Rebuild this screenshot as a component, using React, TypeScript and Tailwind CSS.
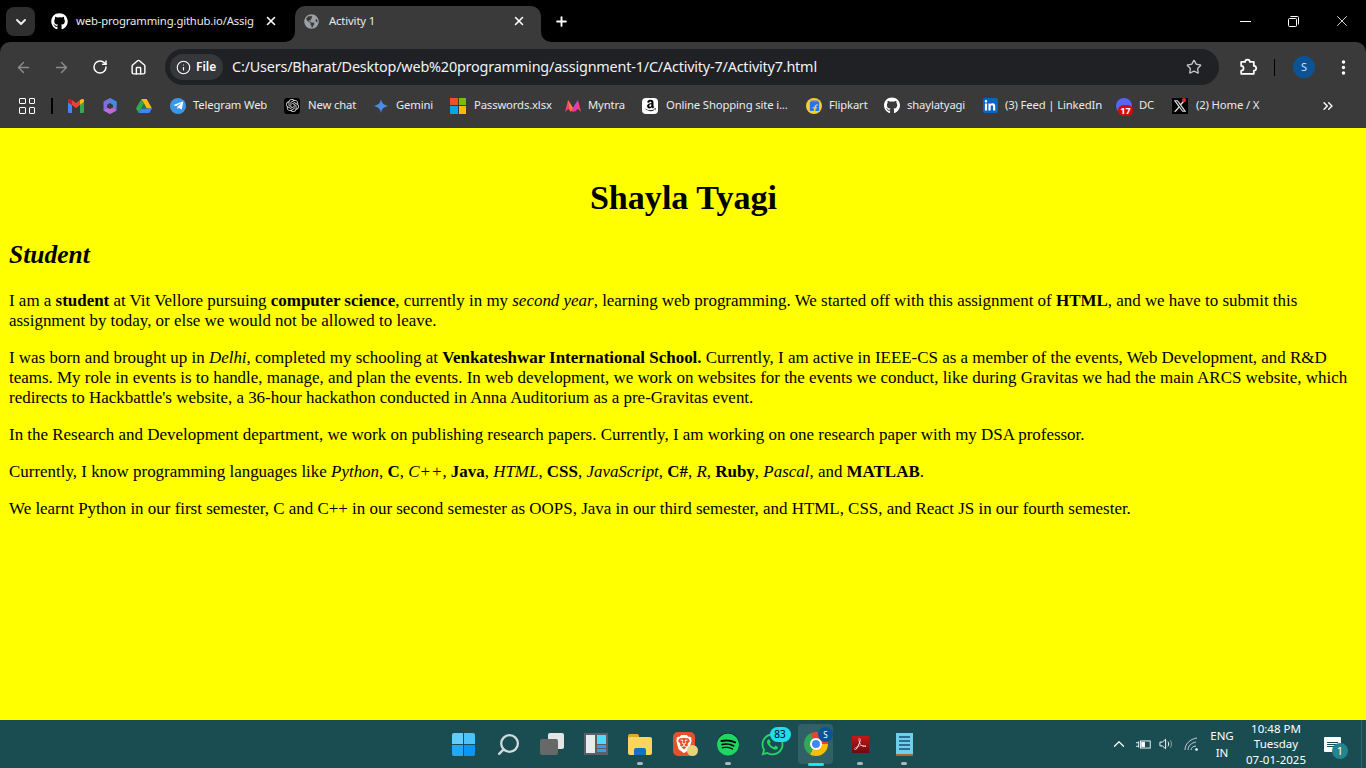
import { ArrowLeft, ArrowRight, ChevronDown, ChevronUp, ChevronsRight, EllipsisVertical, House, Info, Plus, RotateCw, Search, Star, X } from "lucide-react";
import { FaGithub, FaTelegramPlane, FaWhatsapp, FaLinkedinIn, FaAmazon, FaGlobeAmericas } from "react-icons/fa";
import { SiSpotify, SiAdobeacrobatreader, SiOpenai, SiFlipkart, SiBrave } from "react-icons/si";

const uiFont = "font-['Noto_Sans',sans-serif]";

function GmailIcon() {
  return (
    <svg viewBox="0 0 16 14" className="w-4 h-[14px]">
      <path d="M0 3v9.500A1.200 1.200 0 0 0 1.200 14H4V6z" fill="#4285f4" />
      <path d="M12 6v8h2.800a1.200 1.200 0 0 0 1.200-1.200V3z" fill="#34a853" />
      <path d="M4 6 8 9l4-3V1L8 4 4 1z" fill="#ea4335" />
      <path d="M0 3l4 3V1L2.400.2A1.500 1.500 0 0 0 0 1.500z" fill="#c5221f" />
      <path d="M12 1v5l4-3V1.500A1.500 1.500 0 0 0 13.600.2z" fill="#fbbc04" />
    </svg>
  );
}

function CopilotIcon() {
  return (
    <svg viewBox="0 0 16 16" className="w-4 h-4">
      <path d="M8 0l6.500 3.500v9L8 16l-6.500-3.500v-9z" fill="#7c6fe0" />
      <path d="M8 0l6.500 3.500v5L8 5z" fill="#3d8fe0" />
      <path d="M1.500 12.500 8 16l6.500-3.500L8 9z" fill="#c06ad8" />
      <path d="M8 5l3 2v2.500L8 11 5 9.500V7z" fill="#3a3a3a" />
    </svg>
  );
}

function DriveIcon() {
  return (
    <svg viewBox="0 0 16 14" className="w-4 h-[14px]">
      <path d="M5.300 0h5.400L16 9.500h-5.300z" fill="#fbbc04" />
      <path d="M5.300 0 0 9.500 2.700 14l5.300-9.300z" fill="#34a853" />
      <path d="M5.300 9.500H16L13.300 14H2.700z" fill="#4285f4" />
      <path d="M5.300 9.500h5.400L8 4.700z" fill="#188038" />
    </svg>
  );
}

function GeminiIcon() {
  return (
    <svg viewBox="0 0 16 16" className="w-4 h-4">
      <path d="M8 1c.6 3.900 2.800 6.200 7 7-4.200.8-6.400 3.100-7 7-.6-3.900-2.800-6.200-7-7 4.200-.8 6.400-3.100 7-7z" fill="#4b8ae8" />
    </svg>
  );
}

function ExcelIcon() {
  return (
    <div className="grid grid-cols-2 gap-px w-4 h-4">
      <div className="bg-[#f25022]" />
      <div className="bg-[#7fba00]" />
      <div className="bg-[#00a4ef]" />
      <div className="bg-[#ffb900]" />
    </div>
  );
}

function MyntraIcon() {
  return (
    <svg viewBox="0 0 16 12" className="w-4 h-3">
      <path d="M0 12 3 0l5 8 5-8 3 12-3-3-5 3-5-3z" fill="#ff3f6c" />
      <path d="M3 0l5 8-3 4z" fill="#ff7a3d" />
      <path d="M13 0 8 8l3 4z" fill="#d63ad8" />
    </svg>
  );
}

function AmazonIcon() {
  return (
    <div className="w-4 h-4 rounded-sm bg-white flex items-center justify-center text-black">
      <FaAmazon size={13} />
    </div>
  );
}

function FlipkartIcon() {
  return (
    <div className="w-4 h-4 rounded-full bg-[#f7ce2f] flex items-center justify-center text-[#2874f0]">
      <SiFlipkart size={11} />
    </div>
  );
}

function LinkedinIcon() {
  return (
    <div className="w-[15px] h-[15px] rounded-[2px] bg-[#0a66c2] flex items-center justify-center text-white">
      <FaLinkedinIn size={12} />
    </div>
  );
}

function DcIcon() {
  return (
    <div className="relative w-4 h-4 rounded-full bg-[#5865f2]">
      <div className="absolute left-[2px] -bottom-[2px] w-[15px] h-[11px] rounded-full bg-[#d00d0d] text-white text-[9px] font-bold leading-[11px] text-center">17</div>
    </div>
  );
}

function XIcon() {
  return (
    <div className="relative w-4 h-4 bg-black flex items-center justify-center">
      <svg viewBox="0 0 24 24" className="w-[14px] h-[14px]" fill="#ddd">
        <path d="M18.200 2h3.300l-7.200 8.300L22.800 22h-6.700l-5.200-6.800L5 22H1.700l7.700-8.800L1.300 2h6.800l4.700 6.200zm-1.200 18h1.800L7.100 3.900H5.100z" />
      </svg>
      <div className="absolute top-0 right-[2px] w-1 h-1 rounded-full bg-[#f4212e]" />
    </div>
  );
}

function ChatGptIcon() {
  return (
    <div className="w-4 h-4 rounded-[3px] bg-black flex items-center justify-center text-[#ddd]">
      <SiOpenai size={13} />
    </div>
  );
}

function TelegramIcon() {
  return (
    <div className="w-4 h-4 rounded-full bg-[#3a97e8] flex items-center justify-center text-white">
      <FaTelegramPlane size={11} />
    </div>
  );
}

function Bookmark({ icon, label, labelClass, gapClass }: { icon: React.ReactNode; label: string; labelClass: string; gapClass: string }) {
  return (
    <div className="flex items-center">
      <div className={`w-4 h-4 flex items-center justify-center shrink-0 ${gapClass}`}>{icon}</div>
      <span className={`text-[11.300px] tracking-[-0.15px] text-[#e8eaed] whitespace-nowrap ${labelClass}`}>{label}</span>
    </div>
  );
}

function ChromeIcon() {
  return (
    <div className="relative w-[24px] h-[24px]">
      <div className="w-[24px] h-[24px] rounded-full bg-[conic-gradient(from_-30deg,#ea4335_0_120deg,#fbbc04_120deg_240deg,#34a853_240deg_360deg)] flex items-center justify-center">
        <div className="w-[12px] h-[12px] rounded-full bg-[#4285f4] border-2 border-white" />
      </div>
      <div className="absolute -top-[5px] -right-[5px] w-[15px] h-[15px] rounded-full bg-[#0b5394] text-white text-[8px] leading-[15px] text-center">S</div>
    </div>
  );
}

function TaskbarSlot({ children, running }: { children: React.ReactNode; running?: boolean }) {
  return (
    <div className="relative w-[44px] h-[48px] flex items-center justify-center">
      {children}
      {running && <div className="absolute left-[19px] bottom-[3px] w-[6px] h-[3px] rounded-full bg-[#a9b8ba]" />}
    </div>
  );
}

function TaskbarIcons() {
  return (
    <div className="flex items-center w-[484px]">
      <div className="w-[44px] h-[48px] flex items-center justify-center -translate-x-px">
        <div className="grid grid-cols-2 gap-[1px] w-[23px] h-[23px]">
          <div className="bg-[#62cdfb] rounded-tl-[2px]" />
          <div className="bg-[#4cc2fa] rounded-tr-[2px]" />
          <div className="bg-[#22a8f5] rounded-bl-[2px]" />
          <div className="bg-[#0f94f0] rounded-br-[2px]" />
        </div>
      </div>
      <div className="w-[44px] h-[48px] flex items-center justify-center text-[#cfdcdc]">
        <Search size={25} strokeWidth={2.2} className="-scale-x-100" />
      </div>
      <div className="w-[44px] h-[48px] flex items-center justify-center">
        <div className="relative w-[24px] h-[22px]">
          <div className="absolute right-0 top-0 w-[16px] h-[16px] bg-[#e4e6e6] rounded-[2px]" />
          <div className="absolute left-0 bottom-0 w-[18px] h-[16px] bg-[#686868] rounded-[2px]" />
        </div>
      </div>
      <div className="w-[44px] h-[48px] flex items-center justify-center">
        <div className="w-[24px] h-[22px] bg-[#5b5f66] p-[2px] flex gap-[2px]">
          <div className="w-[9px] bg-[#e8ebee]" />
          <div className="flex-1 flex flex-col gap-[1px]">
            <div className="h-[9px] bg-[#4fdcf7]" />
            <div className="h-[3px] bg-[#2aa6e8]" />
            <div className="h-[3px] bg-[#2aa6e8]" />
          </div>
        </div>
      </div>
      <TaskbarSlot running>
        <div className="relative w-[24px] h-[21px]">
          <div className="absolute left-0 top-0 w-[11px] h-[5px] bg-[#e0a92a] rounded-t-[2px]" />
          <div className="absolute left-0 top-[3px] w-[24px] h-[18px] bg-[#fbd55e] rounded-[2px]" />
          <div className="absolute left-[6px] bottom-0 w-[12px] h-[7px] bg-[#1273c4] rounded-t-[2px]" />
        </div>
      </TaskbarSlot>
      <TaskbarSlot>
        <div className="relative w-[22px] h-[24px] rounded-[5px] bg-[#e7512a] flex items-center justify-center text-white">
          <SiBrave size={18} />
          <div className="absolute -right-[3px] bottom-0 w-[11px] h-[11px] rounded-full bg-[#e8d27a]" />
        </div>
      </TaskbarSlot>
      <TaskbarSlot running>
        <div className="w-[22px] h-[22px] rounded-full bg-black flex items-center justify-center text-[#1ed760]">
          <SiSpotify size={23} />
        </div>
      </TaskbarSlot>
      <TaskbarSlot>
        <div className="relative text-[#25d366]">
          <FaWhatsapp size={25} />
          <div className="absolute -top-[5px] -right-[6px] w-[21px] h-[15px] rounded-full bg-[#22dcea] text-black text-[10px] leading-[15px] text-center">83</div>
        </div>
      </TaskbarSlot>
      <div className="relative w-[44px] h-[48px] flex items-center justify-center">
        <div className="absolute left-[4px] top-[4px] w-[35px] h-[40px] rounded-[4px] bg-[#2f6166]" />
        <div className="relative"><ChromeIcon /></div>
        <div className="absolute left-[14px] bottom-[2px] w-[16px] h-[3px] rounded-full bg-[#22e3f2]" />
      </div>
      <TaskbarSlot running>
        <div className="w-[17px] h-[17px] bg-gradient-to-b from-[#c8161c] to-[#6d0a0d] flex items-center justify-center text-white">
          <SiAdobeacrobatreader size={12} />
        </div>
      </TaskbarSlot>
      <TaskbarSlot running>
        <div className="w-[17px] h-[23px] bg-[#6fd0ee] border-b-2 border-[#a86a2c] flex flex-col gap-[2px] justify-center px-[3px]">
          <div className="h-[2px] bg-[#2a6f90]" />
          <div className="h-[2px] bg-[#2a6f90]" />
          <div className="h-[2px] bg-[#2a6f90]" />
          <div className="h-[2px] bg-[#2a6f90]" />
        </div>
      </TaskbarSlot>
    </div>
  );
}

function Tray() {
  return (
    <div className={`flex items-center flex-1 h-full text-white text-[11.500px] ${uiFont}`}>
      <div className="w-[20px] ml-[183px] flex justify-center"><ChevronUp size={18} strokeWidth={1.6} /></div>
      <svg viewBox="0 0 18 12" className="w-[16px] h-[11px] ml-[7px]" fill="none" stroke="#fff" strokeWidth="1">
        <rect x="5" y="2" width="11" height="8" />
        <path d="M0 4h3M0 8h3M3 2.500v7" />
        <rect x="6.500" y="3.500" width="3" height="5" fill="#fff" />
      </svg>
      <svg viewBox="0 0 18 14" className="w-[17px] h-[14px] ml-[7px]" fill="none" stroke="#fff" strokeWidth="1">
        <path d="M1 5h2.500L7 2v10L3.500 9H1z" />
        <path d="M9.500 4.500c1 1.500 1 3.500 0 5" />
        <path d="M12 3c1.600 2.500 1.600 5.500 0 8" opacity=".5" />
      </svg>
      <svg viewBox="0 0 16 14" className="w-[16px] h-[14px] ml-[8px]" fill="none" stroke="#ccd" strokeWidth="1">
        <path d="M1 13C1 7 6 2 13 1" />
        <path d="M4 13c0-4 3-7 8-8" />
        <path d="M7 13c0-2 2-4 5-4" />
        <circle cx="12.500" cy="12.500" r="1.300" fill="#fff" stroke="none" />
      </svg>
      <div className="w-[38px] ml-[3px] text-center leading-[17px]">
        <div>ENG</div>
        <div>IN</div>
      </div>
      <div className="w-[70px] text-center leading-[15.500px]">
        <div>10:48 PM</div>
        <div>Tuesday</div>
        <div>07-01-2025</div>
      </div>
      <div className="relative ml-[13px] w-[17px] h-[15px] bg-white rounded-[1px] flex flex-col gap-[1px] justify-center px-[3px]">
        <div className="h-px bg-[#1a4d52]" />
        <div className="h-px bg-[#1a4d52]" />
        <div className="h-px bg-[#1a4d52]" />
        <div className="absolute -right-[7px] -bottom-[7px] w-[16px] h-[16px] rounded-full bg-[#22858f] text-[11px] leading-[16px] text-center">1</div>
      </div>
      <div className="flex-1" />
      <div className="w-px h-full bg-[#2f6166] mr-[4px]" />
    </div>
  );
}

export default function App() {
  return (
    <div className="w-[1366px] h-[768px] overflow-hidden flex flex-col bg-black">
      {/* tab strip */}
      <div className={`h-[42px] flex items-end bg-black text-[11.300px] tracking-[-0.15px] text-[#e8eaed] ${uiFont}`}>
        <div className="w-[29px] h-[29px] ml-[6px] mb-[6px] rounded-lg bg-[#2f2f2f] flex items-center justify-center">
          <ChevronDown size={16} strokeWidth={3} />
        </div>
        <div className="flex items-center w-[260px] h-[36px] pl-[16px] pb-[6px]">
          <FaGithub size={17} className="text-white shrink-0" />
          <span className="ml-[8px] w-[177px] whitespace-nowrap">web-programming.github.io/Assig</span>
          <X size={14} strokeWidth={2.6} className="ml-[11px] text-white shrink-0" />
        </div>
        <div className="relative flex items-center w-[246px] h-[36px] pl-[9px] pb-[6px] rounded-t-[10px] bg-[#3a3a3a]">
          <svg viewBox="0 0 10 10" className="absolute -left-[10px] bottom-0 w-[10px] h-[10px]" fill="#3a3a3a"><path d="M10 0v10H0a10 10 0 0 0 10-10z" /></svg>
          <svg viewBox="0 0 10 10" className="absolute -right-[10px] bottom-0 w-[10px] h-[10px]" fill="#3a3a3a"><path d="M0 0v10h10A10 10 0 0 1 0 0z" /></svg>
          <FaGlobeAmericas size={15} className="text-[#9aa0a6] shrink-0" />
          <span className="ml-[10px] w-[183px] whitespace-nowrap">Activity 1</span>
          <X size={14} strokeWidth={2.6} className="text-white shrink-0" />
        </div>
        <div className="h-[36px] flex items-center ml-[13px] pb-[6px]">
          <Plus size={15} strokeWidth={3} className="text-white" />
        </div>
        <div className="flex-1" />
        <div className="h-[42px] flex items-center text-white">
          <div className="w-[48px] flex justify-center"><div className="w-[11px] h-px bg-white" /></div>
          <div className="w-[48px] flex justify-center">
            <svg viewBox="0 0 11 11" className="w-[11px] h-[11px]" fill="none" stroke="#fff">
              <rect x=".5" y="2.500" width="8" height="8" rx="1" />
              <path d="M2.500.5h7a1 1 0 0 1 1 1v7" />
            </svg>
          </div>
          <div className="w-[49px] flex justify-center"><X size={18} strokeWidth={1.1} /></div>
        </div>
      </div>

      {/* toolbar */}
      <div className="h-[46px] bg-[#3a3a3a] rounded-t-[10px] flex items-center pl-[15px] pt-[4px] text-[#e8eaed]">
        <ArrowLeft size={17} className="text-[#8a8c8e]" />
        <ArrowRight size={17} className="ml-[21px] text-[#8a8c8e]" />
        <RotateCw size={16} strokeWidth={2.2} className="ml-[22px] text-white" />
        <House size={17} strokeWidth={2} className="ml-[22px] text-white" />
        <div className={`ml-[18px] w-[1054px] h-[36px] rounded-full bg-[#202124] flex items-center pl-[5px] pr-[17px] ${uiFont}`}>
          <div className="w-[53px] h-[26px] rounded-full bg-[#36373a] flex items-center pl-[6px] gap-[5px]">
            <Info size={15} strokeWidth={1.8} className="text-white shrink-0" />
            <span className="text-[12px] font-semibold text-white">File</span>
          </div>
          <span className="ml-[9px] text-[14.400px] text-[#f1f3f4] whitespace-nowrap tracking-[-0.19px]">C:/Users/Bharat/Desktop/web%20programming/assignment-1/C/Activity-7/Activity7.html</span>
          <div className="flex-1" />
          <Star size={16} strokeWidth={2} className="text-[#c4c7c5]" />
        </div>
        <svg viewBox="0 0 24 24" className="w-[19px] h-[19px] ml-[19px]" fill="none" stroke="#fff" strokeWidth="2.200" strokeLinejoin="round">
          <path d="M4 5h5a3 3 0 0 1 6 0h5v5a3 3 0 0 1 0 6v4H4v-4a3 3 0 0 0 0-6z" />
        </svg>
        <div className="w-px h-[17px] bg-black ml-[17px]" />
        <div className="w-[22px] h-[22px] ml-[18px] rounded-full bg-[#0b5394] text-[#cfe2ff] text-[11px] leading-[22px] text-center font-['Noto_Sans',sans-serif]">S</div>
        <EllipsisVertical size={19} strokeWidth={2.4} className="ml-[19px] text-white" />
      </div>

      {/* bookmarks */}
      <div className={`h-[40px] bg-[#3a3a3a] flex items-center pl-[19px] pb-[5px] ${uiFont}`}>
        <div className="w-4 h-4 grid grid-cols-2 gap-[3px]">
          <div className="border-[1.500px] border-white rounded-[1px]" />
          <div className="border-[1.500px] border-white rounded-[1px]" />
          <div className="border-[1.500px] border-white rounded-[1px]" />
          <div className="border-[1.500px] border-white rounded-[1px]" />
        </div>
        <div className="w-[2px] h-[16px] bg-black ml-[16px] mr-[15px]" />
        <div className="w-4 flex justify-center"><GmailIcon /></div>
        <div className="w-4 ml-[18px]"><CopilotIcon /></div>
        <div className="w-4 ml-[18px]"><DriveIcon /></div>
        <div className="flex items-center ml-[18px] gap-[17px]">
          <Bookmark icon={<TelegramIcon />} label="Telegram Web" labelClass="w-[74px]" gapClass="mr-[7px]" />
          <Bookmark icon={<ChatGptIcon />} label="New chat" labelClass="w-[48px]" gapClass="mr-[8px]" />
          <Bookmark icon={<GeminiIcon />} label="Gemini" labelClass="w-[37px]" gapClass="mr-[7px]" />
          <Bookmark icon={<ExcelIcon />} label="Passwords.xlsx" labelClass="w-[74px]" gapClass="mr-[8px]" />
          <Bookmark icon={<MyntraIcon />} label="Myntra" labelClass="w-[37px]" gapClass="mr-[7px]" />
          <Bookmark icon={<AmazonIcon />} label="Online Shopping site i..." labelClass="w-[123px]" gapClass="mr-[8px]" />
          <Bookmark icon={<FlipkartIcon />} label="Flipkart" labelClass="w-[38px]" gapClass="mr-[7px]" />
          <Bookmark icon={<FaGithub size={17} className="text-white" />} label="shaylatyagi" labelClass="w-[58px]" gapClass="mr-[7px]" />
          <Bookmark icon={<LinkedinIcon />} label="(3) Feed | LinkedIn" labelClass="w-[94px]" gapClass="mr-[7px]" />
          <Bookmark icon={<DcIcon />} label="DC" labelClass="w-[16px]" gapClass="mr-[7px]" />
          <Bookmark icon={<XIcon />} label="(2) Home / X" labelClass="w-[66px]" gapClass="mr-[8px]" />
        </div>
        <ChevronsRight size={16} strokeWidth={2} className="ml-[58px] text-white" />
      </div>

      {/* page */}
      <main className="flex-1 bg-[#ffff00] text-black pl-[9px] pr-[8px] pt-[50px] font-['Liberation_Serif',serif] text-[16.950px] leading-[20px]">
        <h1 className="text-[34.100px] leading-[40px] font-bold text-center">Shayla Tyagi</h1>
        <h2 className="mt-[22px] text-[25.500px] leading-[30px] font-bold italic">Student</h2>
        <p className="mt-[21px]">
          I am a <b>student</b> at Vit Vellore pursuing <b>computer science</b>, currently in my <i>second year</i>, learning web programming. We started off with this assignment of <b>HTML</b>, and we have to submit this assignment by today, or else we would not be allowed to leave.
        </p>
        <p className="mt-[17px]">
          I was born and brought up in <i>Delhi</i>, completed my schooling at <b>Venkateshwar International School.</b> Currently, I am active in IEEE-CS as a member of the events, Web Development, and R&amp;D teams. My role in events is to handle, manage, and plan the events. In web development, we work on websites for the events we conduct, like during Gravitas we had the main ARCS website, which redirects to Hackbattle's website, a 36-hour hackathon conducted in Anna Auditorium as a pre-Gravitas event.
        </p>
        <p className="mt-[17px]">
          In the Research and Development department, we work on publishing research papers. Currently, I am working on one research paper with my DSA professor.
        </p>
        <p className="mt-[17px]">
          Currently, I know programming languages like <i>Python</i>, <b>C</b>, <i>C++</i>, <b>Java</b>, <i>HTML</i>, <b>CSS</b>, <i>JavaScript</i>, <b>C#</b>, <i>R</i>, <b>Ruby</b>, <i>Pascal</i>, and <b>MATLAB</b>.
        </p>
        <p className="mt-[17px]">
          We learnt Python in our first semester, C and C++ in our second semester as OOPS, Java in our third semester, and HTML, CSS, and React JS in our fourth semester.
        </p>
      </main>

      {/* taskbar */}
      <footer className="h-[48px] bg-[#1a4d52] flex items-center pl-[442px]">
        <TaskbarIcons />
        <Tray />
      </footer>
    </div>
  );
}
